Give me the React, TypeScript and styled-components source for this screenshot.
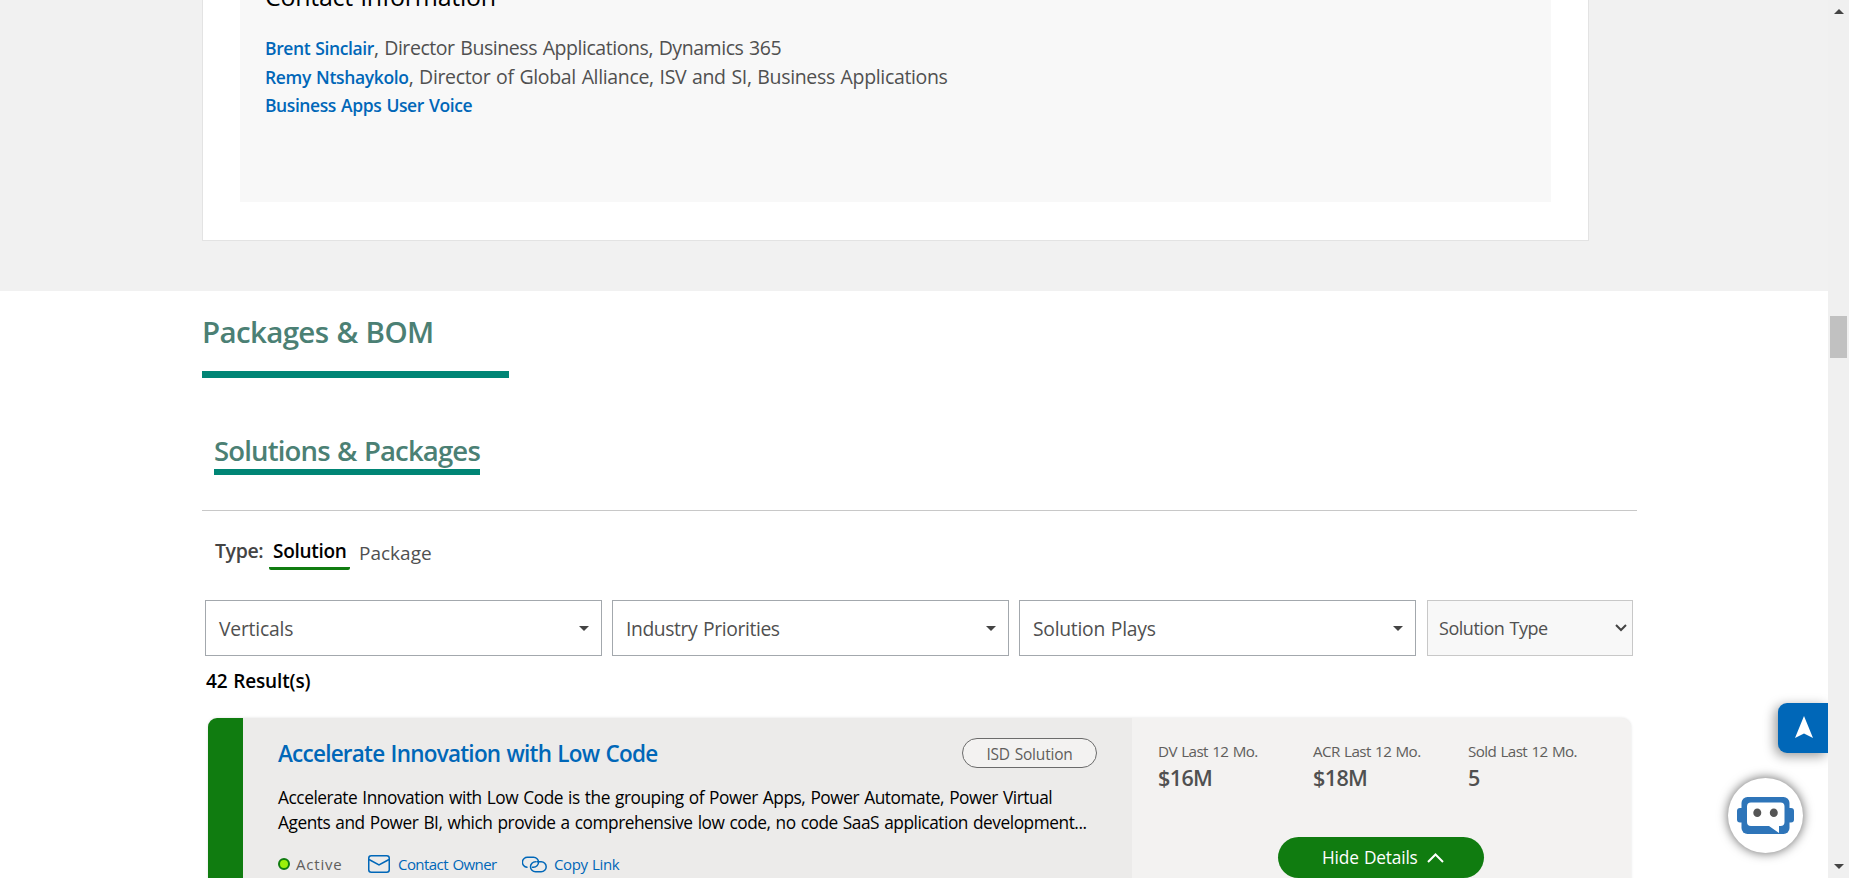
import React from "react";
import styled, { createGlobalStyle } from "styled-components";

const GlobalStyle = createGlobalStyle`
  *, *::before, *::after { box-sizing: border-box; }
  html, body { margin: 0; padding: 0; overflow: hidden; background: #fff; }
  body { font-family: "Open Sans", "Noto Sans", sans-serif; word-spacing: 1px; }
  h1, h2, h3, p { margin: 0; font-weight: 400; }
`;

const Page = styled.div`
  display: flex;
  width: 1849px;
  height: 878px;
  overflow: hidden;
`;

const Main = styled.main`
  width: 1828px;
  height: 878px;
  overflow: hidden;
  background: #fff;
`;

const ContactSection = styled.section`
  height: 291px;
  padding-left: 202px;
  background: #f1f1f1;
`;

const ContactCard = styled.div`
  width: 1387px;
  height: 241px;
  padding: 0 37px;
  background: #fff;
  border: 1px solid #e3e3e3;
  border-top: 0;
`;

const ContactPanel = styled.div`
  height: 202px;
  padding-left: 25px;
  background: #f8f8f8;
  overflow: hidden;
`;

const ContactTitle = styled.h2`
  margin-top: -22px;
  font-size: 25px;
  line-height: 36px;
  letter-spacing: -0.27px;
  color: #000;
  white-space: nowrap;
`;

const ContactList = styled.div`
  margin-top: 20px;
`;

const ContactRow = styled.p<{ $track: number }>`
  font-size: 19.5px;
  line-height: 28.6px;
  color: #505050;
  letter-spacing: ${(p) => p.$track}px;
  white-space: nowrap;
`;

const ContactName = styled.a<{ $track: number }>`
  font-size: 17.5px;
  font-weight: 600;
  color: #0067b8;
  letter-spacing: ${(p) => p.$track}px;
`;

const Packages = styled.section`
  width: 1637px;
  padding-left: 202px;
`;

const SectionTitle = styled.h1`
  width: 307px;
  height: 87px;
  padding-top: 21px;
  border-bottom: 7px solid #008575;
  font-size: 29.5px;
  font-weight: 600;
  line-height: 40px;
  letter-spacing: -0.65px;
  color: #4b8074;
  white-space: nowrap;
`;

const TabBar = styled.div`
  display: flex;
  height: 133px;
  padding: 51px 0 0 12px;
  border-bottom: 1px solid #c8c8c8;
`;

const Tab = styled.h2`
  width: 266px;
  height: 46px;
  border-bottom: 6px solid #008575;
  font-size: 27.5px;
  font-weight: 600;
  line-height: 44px;
  letter-spacing: -0.83px;
  color: #4b8074;
  white-space: nowrap;
`;

const TypeRow = styled.div`
  display: flex;
  height: 89px;
  padding: 24px 0 0 13px;
  line-height: 32px;
  white-space: nowrap;
`;

const TypeLabel = styled.span`
  width: 54px;
  font-size: 19.5px;
  font-weight: 600;
  letter-spacing: -0.4px;
  color: #444;
`;

const TypeOption = styled.span<{ $active?: boolean }>`
  width: 81px;
  height: 35px;
  margin-right: ${(p) => (p.$active ? 9 : 0)}px;
  padding: ${(p) => (p.$active ? "0 0 0 4px" : "2px 0 0")};
  border-bottom: 3px solid ${(p) => (p.$active ? "#107c10" : "transparent")};
  border-radius: 2px;
  font-size: 19px;
  font-weight: ${(p) => (p.$active ? 600 : 400)};
  letter-spacing: ${(p) => (p.$active ? -0.3 : 0)}px;
  color: ${(p) => (p.$active ? "#000" : "#505050")};
`;

const Filters = styled.div`
  display: flex;
  gap: 10px;
  padding-left: 3px;
`;

const Dropdown = styled.div<{ $track: number }>`
  display: flex;
  align-items: center;
  justify-content: space-between;
  width: 397px;
  height: 56px;
  padding: 0 12px 0 13px;
  border: 1px solid #a3a8ad;
  font-size: 19.3px;
  letter-spacing: ${(p) => p.$track}px;
  color: #505050;
  white-space: nowrap;

  span { padding-top: 1px; }
`;

const TypeSelect = styled.div`
  display: flex;
  align-items: center;
  justify-content: space-between;
  width: 206px;
  height: 56px;
  margin-left: 1px;
  padding: 0 5px 0 11px;
  border: 1px solid #c8c8c8;
  background: #f8f8f8;
  font-size: 18px;
  letter-spacing: -0.47px;
  color: #505050;
  white-space: nowrap;
`;

const ResultCount = styled.p`
  height: 62px;
  padding: 12px 0 0 4px;
  font-size: 19px;
  font-weight: 600;
  line-height: 26px;
  letter-spacing: -0.15px;
  color: #000;
`;

const SolutionCard = styled.article`
  display: flex;
  width: 1423px;
  height: 190px;
  margin-left: 6px;
  border-radius: 9px;
  background: #f3f2f1;
  box-shadow: 0 0 3px rgba(0, 0, 0, 0.12);
  overflow: hidden;
`;

const Stripe = styled.div`
  width: 35px;
  background: #107c10;
`;

const Summary = styled.div`
  width: 889px;
  padding: 20px 35px 0;
  background: #ecebea;
`;

const SummaryHead = styled.div`
  display: flex;
  justify-content: space-between;
  height: 47px;
`;

const SolutionTitle = styled.h3`
  font-size: 22.5px;
  font-weight: 600;
  line-height: 32px;
  letter-spacing: -0.76px;
  color: #0067b8;
  white-space: nowrap;
`;

const Badge = styled.span`
  width: 135px;
  height: 30px;
  border: 1px solid #6b6b6b;
  border-radius: 15px;
  background: #f3f2f1;
  font-size: 15.5px;
  line-height: 31px;
  letter-spacing: -0.2px;
  color: #605e5c;
  text-align: center;
`;

const DescriptionLine = styled.p<{ $track: number }>`
  font-size: 17.3px;
  line-height: 25px;
  letter-spacing: ${(p) => p.$track}px;
  color: #000;
  white-space: nowrap;
`;

const Meta = styled.div`
  display: flex;
  align-items: center;
  height: 22px;
  margin-top: 18px;
  font-size: 15px;
  line-height: 22px;
  white-space: nowrap;
`;

const StatusDot = styled.i`
  width: 12px;
  height: 12px;
  border: 2px solid #107c10;
  border-radius: 50%;
  background: #9bf00b;
`;

const StatusText = styled.span`
  width: 72px;
  margin-left: 6px;
  letter-spacing: 0.8px;
  color: #605e5c;
`;

const MetaLink = styled.a<{ $gap: number; $width: number; $track: number }>`
  display: flex;
  align-items: center;
  gap: ${(p) => p.$gap}px;
  width: ${(p) => p.$width}px;
  letter-spacing: ${(p) => p.$track}px;
  color: #0067b8;
`;

const Metrics = styled.div`
  flex: 1;
  padding: 21px 0 0 26px;
`;

const MetricRow = styled.div`
  display: grid;
  grid-template-columns: 155px 155px 155px;
  height: 98px;
  white-space: nowrap;
`;

const MetricLabel = styled.div`
  font-size: 15.2px;
  line-height: 24px;
  letter-spacing: -0.6px;
  color: #605e5c;
`;

const MetricValue = styled.div`
  font-size: 21.5px;
  font-weight: 600;
  line-height: 30px;
  letter-spacing: -0.6px;
  color: #505050;
`;

const DetailsButton = styled.button`
  display: flex;
  align-items: center;
  gap: 9px;
  width: 206px;
  height: 41px;
  margin-left: 120px;
  padding: 0 0 0 44px;
  border: 0;
  border-radius: 21px;
  background: #107c10;
  font-family: inherit;
  font-size: 17.3px;
  letter-spacing: -0.18px;
  word-spacing: 1px;
  color: #fff;
  white-space: nowrap;
`;

const NavBadge = styled.div`
  position: absolute;
  left: 1778px;
  top: 703px;
  display: flex;
  align-items: center;
  justify-content: center;
  width: 50px;
  height: 50px;
  padding: 0 0 2px 2px;
  border-radius: 9px 0 0 9px;
  background: #0067b8;
  box-shadow: -3px 3px 12px rgba(0, 0, 0, 0.4);
  clip-path: inset(-20px 0 -20px -20px);
`;

const ChatBadge = styled.div`
  position: absolute;
  left: 1728px;
  top: 778px;
  display: flex;
  align-items: center;
  justify-content: center;
  width: 75px;
  height: 75px;
  border-radius: 50%;
  background: #fff;
  box-shadow: 0 0 11px rgba(0, 0, 0, 0.62);
`;

const Scrollbar = styled.aside`
  display: flex;
  flex-direction: column;
  align-items: center;
  width: 21px;
  height: 878px;
  padding: 9px 0;
  background: #f0f0f0;
`;

const Thumb = styled.div`
  width: 17px;
  height: 42px;
  margin: 302px 0 auto;
  background: #c1c1c1;
`;

const Caret = ({ up = false }: { up?: boolean }) => (
  <svg width="10" height="5" viewBox="0 0 10 5">
    <path d={up ? "M0 5h10L5 0z" : "M0 0h10L5 5z"} fill="#444" />
  </svg>
);

export default function App() {
  return (
    <Page>
      <GlobalStyle />
      <Main>
        <ContactSection>
          <ContactCard>
            <ContactPanel>
              <ContactTitle>Contact Information</ContactTitle>
              <ContactList>
                <ContactRow $track={-0.44}>
                  <ContactName $track={-0.4}>Brent Sinclair</ContactName>, Director Business Applications, Dynamics 365
                </ContactRow>
                <ContactRow $track={-0.34}>
                  <ContactName $track={-0.35}>Remy Ntshaykolo</ContactName>, Director of Global Alliance, ISV and SI,
                  Business Applications
                </ContactRow>
                <ContactRow $track={-0.3}>
                  <ContactName $track={-0.42}>Business Apps User Voice</ContactName>
                </ContactRow>
              </ContactList>
            </ContactPanel>
          </ContactCard>
        </ContactSection>

        <Packages>
          <SectionTitle>Packages &amp; BOM</SectionTitle>
          <TabBar>
            <Tab>Solutions &amp; Packages</Tab>
          </TabBar>
          <TypeRow>
            <TypeLabel>Type:</TypeLabel>
            <TypeOption $active>Solution</TypeOption>
            <TypeOption>Package</TypeOption>
          </TypeRow>
          <Filters>
            <Dropdown $track={-0.2}><span>Verticals</span><Caret /></Dropdown>
            <Dropdown $track={-0.38}><span>Industry Priorities</span><Caret /></Dropdown>
            <Dropdown $track={-0.25}><span>Solution Plays</span><Caret /></Dropdown>
            <TypeSelect>
              <span>Solution Type</span>
              <svg width="12" height="8" viewBox="0 0 12 8" fill="none" stroke="#444" strokeWidth="2">
                <path d="M1 1l5 5 5-5" />
              </svg>
            </TypeSelect>
          </Filters>
          <ResultCount>42 Result(s)</ResultCount>
          <SolutionCard>
            <Stripe />
            <Summary>
              <SummaryHead>
                <SolutionTitle>Accelerate Innovation with Low Code</SolutionTitle>
                <Badge>ISD Solution</Badge>
              </SummaryHead>
              <DescriptionLine $track={-0.45}>
                Accelerate Innovation with Low Code is the grouping of Power Apps, Power Automate, Power Virtual
              </DescriptionLine>
              <DescriptionLine $track={-0.46}>
                Agents and Power BI, which provide a comprehensive low code, no code SaaS application development...
              </DescriptionLine>
              <Meta>
                <StatusDot />
                <StatusText>Active</StatusText>
                <MetaLink $gap={8} $width={154} $track={-0.55}>
                  <svg width="22" height="18" viewBox="0 0 22 18" fill="none" stroke="#0067b8" strokeWidth="1.5">
                    <rect x="0.75" y="0.75" width="20.5" height="16.5" rx="2.5" />
                    <path d="M1 4.5l10 5.5 10-5.5" />
                  </svg>
                  Contact Owner
                </MetaLink>
                <MetaLink $gap={7} $width={100} $track={-0.4}>
                  <svg width="25" height="17" viewBox="0 0 25 17" fill="none" stroke="#0067b8" strokeWidth="1.5" strokeLinecap="round">
                    <path d="M5 11.3A5 5 0 0 1 5.8 1.3h5.7a5 5 0 0 1 0 10h-1" />
                    <path d="M15 5.7h4.2a5 5 0 0 1 0 10h-5.7a5 5 0 0 1 0-10" />
                  </svg>
                  Copy Link
                </MetaLink>
              </Meta>
            </Summary>
            <Metrics>
              <MetricRow>
                <div>
                  <MetricLabel>DV Last 12 Mo.</MetricLabel>
                  <MetricValue>$16M</MetricValue>
                </div>
                <div>
                  <MetricLabel>ACR Last 12 Mo.</MetricLabel>
                  <MetricValue>$18M</MetricValue>
                </div>
                <div>
                  <MetricLabel>Sold Last 12 Mo.</MetricLabel>
                  <MetricValue>5</MetricValue>
                </div>
              </MetricRow>
              <DetailsButton>
                Hide Details
                <svg width="17" height="10" viewBox="0 0 17 10" fill="none" stroke="#fff" strokeWidth="2">
                  <path d="M1 9l7.5-7.5L16 9" />
                </svg>
              </DetailsButton>
            </Metrics>
          </SolutionCard>
        </Packages>
      </Main>
      <Scrollbar>
        <Caret up />
        <Thumb />
        <Caret />
      </Scrollbar>
      <NavBadge>
        <svg width="18" height="22" viewBox="0 0 18 22">
          <path d="M9 0l9 22-9-4.5L0 22z" fill="#fff" />
        </svg>
      </NavBadge>
      <ChatBadge>
        <svg width="57" height="37" viewBox="0 0 57 37">
          <rect x="0" y="11" width="57" height="14.500" rx="3" fill="#2e75b9" />
          <rect x="4.500" y="0" width="48" height="37" rx="6" fill="#2e75b9" />
          <path d="M14 5.500h29.500a4 4 0 0 1 4 4V25a4 4 0 0 1-4 4H42v7l-10-7H14a4 4 0 0 1-4-4V9.500a4 4 0 0 1 4-4z" fill="#fff" />
          <ellipse cx="20.300" cy="15.800" rx="4" ry="4.300" fill="#555" />
          <ellipse cx="36.800" cy="15.800" rx="4" ry="4.300" fill="#555" />
        </svg>
      </ChatBadge>
    </Page>
  );
}
